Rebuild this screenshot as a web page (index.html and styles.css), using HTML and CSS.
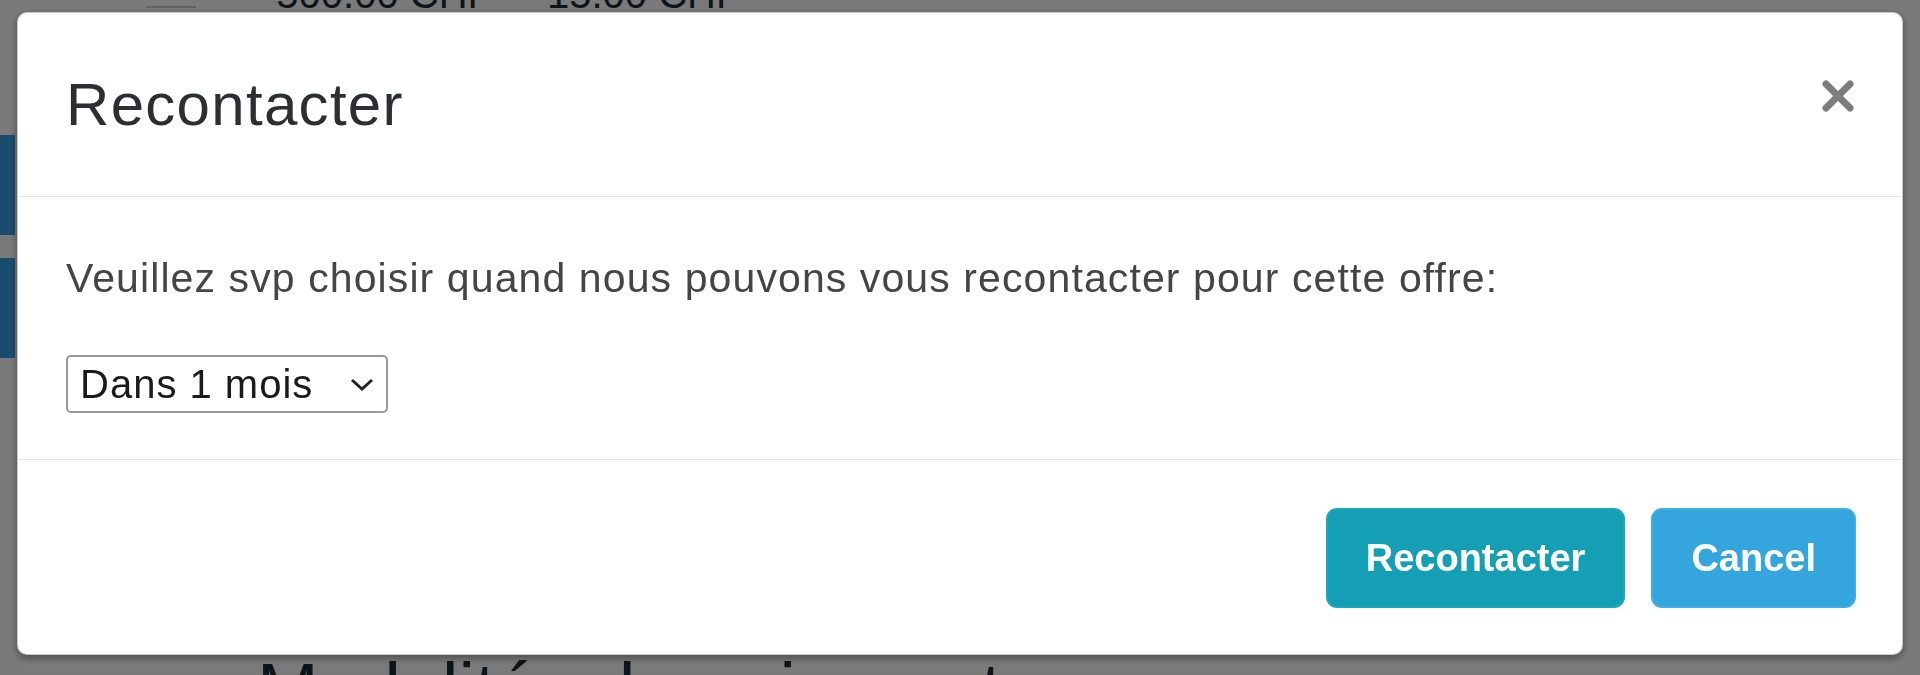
FILE: index.html
```html
<!DOCTYPE html>
<html lang="fr">

<head>
  <meta charset="UTF-8" />
  <meta name="viewport" content="width=device-width, initial-scale=1.0" />
  <title>Recontacter</title>
  <link rel="stylesheet" href="styles.css">
</head>

<body>
  <div class="page">
    <div class="amounts">
      <span class="rule"></span>
      <span>-500.00 CHF</span>
      <span class="amount-next">15.00 CHF</span>
    </div>
    <div class="side">
      <div class="tab"></div>
      <div class="tab"></div>
    </div>
    <h2 class="section">Modalités de paiement</h2>
  </div>

  <div class="backdrop">
    <div class="modal">
      <div class="modal-header">
        <h4 class="modal-title">Recontacter</h4>
        <button class="close" type="button" aria-label="Close">
          <svg width="34" height="34" viewBox="0 0 34 34">
            <path d="M5 5 L29 29 M29 5 L5 29" stroke="#7d7d7d" stroke-width="7" stroke-linecap="round" />
          </svg>
        </button>
      </div>
      <div class="modal-body">
        <p>Veuillez svp choisir quand nous pouvons vous recontacter pour cette offre:</p>
        <div class="select-wrap">
          <select class="when">
            <option>Dans 1 mois</option>
            <option>Dans 3 mois</option>
            <option>Dans 6 mois</option>
          </select>
          <svg class="chevron" width="26" height="15" viewBox="0 0 26 15">
            <path d="M3 3 L13 12 L23 3" fill="none" stroke="#222" stroke-width="3" />
          </svg>
        </div>
      </div>
      <div class="modal-footer">
        <button class="btn btn-info" type="button">Recontacter</button>
        <button class="btn btn-primary" type="button">Cancel</button>
      </div>
    </div>
  </div>
</body>

</html>
```

FILE: styles.css
```css
body {
  margin: 0;
  background-color: #fff;
  font-family: "Liberation Sans", Arial, sans-serif;
  overflow: hidden;
}

/* page behind the dialog */
.page {
  height: 675px;
  display: flex;
  flex-direction: column;
}

.amounts {
  display: flex;
  align-items: flex-end;
  height: 14px;
  padding-left: 146px;
  font-size: 40px;
  line-height: 1;
  color: #1e2c36;
  overflow: hidden;
}

.amounts .rule {
  width: 50px;
  height: 2px;
  margin: 0 67px 6px 0;
  background-color: #ccc;
}

.amounts .amount-next {
  margin-left: 55px;
}

.side {
  display: flex;
  flex-direction: column;
  gap: 23px;
  margin-top: 121px;
}

.side .tab {
  width: 15px;
  height: 100px;
  background-color: #38a2e3;
}

.section {
  margin: auto 0 0 257px;
  height: 22px;
  font-size: 74px;
  font-weight: 400;
  line-height: 1;
  color: #1e2c36;
  overflow: hidden;
}

/* dialog */
.backdrop {
  position: fixed;
  top: 0;
  left: 0;
  right: 0;
  bottom: 0;
  padding: 12px 17px;
  background-color: rgba(0, 0, 0, 0.52);
}

.modal {
  height: 643px;
  box-sizing: border-box;
  background-color: #fff;
  border: 1px solid rgba(0, 0, 0, 0.2);
  border-radius: 10px;
  box-shadow: 0 3px 9px rgba(0, 0, 0, 0.4);
  display: flex;
  flex-direction: column;
}

.modal-header {
  display: flex;
  align-items: center;
  justify-content: space-between;
  height: 184px;
  box-sizing: border-box;
  padding: 0 47px 0 48px;
  border-bottom: 1px solid #e5e5e5;
}

.modal-title {
  margin: 0;
  font-size: 60px;
  font-weight: 400;
  color: #2b2f33;
  letter-spacing: 1.3px;
}

.close {
  padding: 0;
  border: 0;
  background: none;
  display: flex;
  margin-top: -18px;
}

.modal-body {
  height: 263px;
  box-sizing: border-box;
  padding: 55px 48px 0;
  border-bottom: 1px solid #e5e5e5;
}

.modal-body p {
  margin: 0 0 50px;
  font-size: 41px;
  line-height: 53px;
  color: #454545;
  letter-spacing: 1.1px;
}

.select-wrap {
  position: relative;
  width: 322px;
}

.when {
  display: block;
  width: 322px;
  height: 58px;
  padding: 0 0 0 12px;
  border: 2px solid #9a9a9a;
  border-radius: 5px;
  background-color: #fff;
  font-family: "Liberation Sans", Arial, sans-serif;
  font-size: 40px;
  letter-spacing: 1px;
  color: #1a1a1a;
  -webkit-appearance: none;
  appearance: none;
}

.chevron {
  position: absolute;
  right: 13px;
  top: 22px;
  pointer-events: none;
}

.modal-footer {
  flex: 1;
  display: flex;
  justify-content: flex-end;
  align-items: flex-start;
  gap: 26px;
  padding: 48px 46px 0;
}

.btn {
  height: 100px;
  padding: 0 38px;
  border: 2px solid transparent;
  border-radius: 11px;
  font-family: "Liberation Sans", Arial, sans-serif;
  font-size: 38px;
  font-weight: 700;
  color: #fff;
}

.btn-info {
  background-color: #149fb5;
  border-color: #1aa8bd;
}

.btn-primary {
  background-color: #35a5dd;
  border-color: #3eaee3;
}
```
